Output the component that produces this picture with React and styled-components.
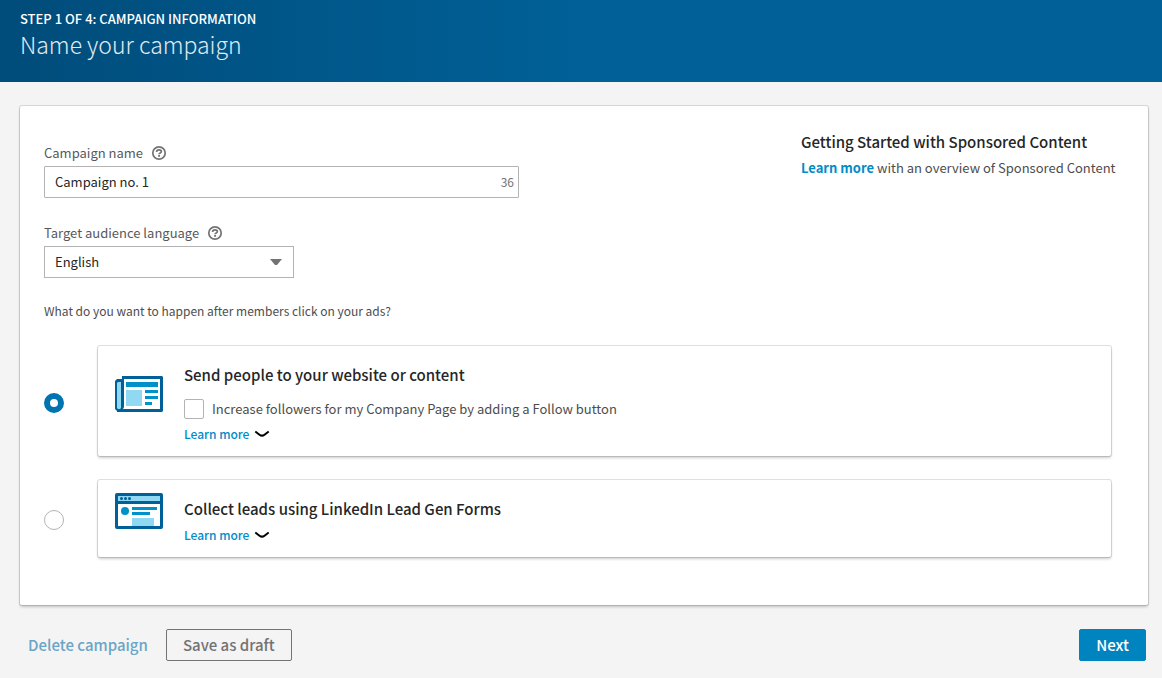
import { useState } from 'react';
import styled, { createGlobalStyle } from 'styled-components';

const GlobalStyle = createGlobalStyle`
    *, *::before, *::after {
        box-sizing: border-box;
    }
    body {
        margin: 0;
        background: #f4f4f4;
        color: #262626;
        font-family: 'Source Sans Pro', 'Noto Sans CJK SC', 'Open Sans', sans-serif;
        font-size: 13px;
        line-height: 20px;
    }
    button, input, select {
        font-family: inherit;
    }
    h1, h2, h3, p, fieldset {
        margin: 0;
        padding: 0;
        border: 0;
        min-width: 0;
    }
`;

const Header = styled.header`
    padding: 9px 20px 23px;
    color: #fff;
    background: linear-gradient(90deg, #004c7a 0%, #006097 50%, #006097 100%);
`;

const Step = styled.p`
    font-size: 13px;
    font-weight: 500;
    line-height: 20px;
`;

const Title = styled.h1`
    font-size: 23px;
    font-weight: 300;
    line-height: 30px;
    color: #e0ebf2;
`;

const Panel = styled.main`
    margin: 24px 14px 24px 20px;
    padding: 24px;
    background: #fff;
    border-radius: 2px;
    box-shadow: 0 0 0 1px rgba(0, 0, 0, 0.12), 0 2px 3px rgba(0, 0, 0, 0.2);
`;

const Top = styled.div`
    display: flex;
    justify-content: space-between;
    align-items: flex-start;
    gap: 24px;
`;

const Fields = styled.div`
    flex: 0 1 475px;
    padding-top: 12px;
`;

const Field = styled.div`
    margin-bottom: 24px;
`;

const LabelRow = styled.div`
    display: flex;
    align-items: center;
    gap: 8px;
    height: 24px;
    padding-bottom: 2px;
    color: #595959;
`;

const HelpButton = styled.button`
    display: flex;
    padding: 0;
    border: 0;
    background: none;
    color: #737373;
    cursor: pointer;
`;

const NameBox = styled.div`
    display: flex;
    align-items: center;
    height: 32px;
    padding-right: 4px;
    border: 1px solid #b3b3b3;
    border-radius: 1px;
`;

const NameInput = styled.input`
    flex: 1;
    min-width: 0;
    padding: 0 10px;
    border: 0;
    outline: 0;
    background: none;
    font-size: 13px;
    line-height: 20px;
    color: #262626;
`;

const Counter = styled.span`
    font-size: 12px;
    color: #737373;
`;

const SelectBox = styled.div`
    display: grid;
    align-items: center;
    width: 250px;
    height: 32px;
    border: 1px solid #b3b3b3;

    & > * {
        grid-area: 1 / 1;
    }
    svg {
        justify-self: end;
        margin-right: 11px;
        pointer-events: none;
    }
`;

const Select = styled.select`
    appearance: none;
    width: 100%;
    height: 30px;
    padding: 0 32px 2px 10px;
    border: 0;
    outline: 0;
    background: none;
    font-size: 13px;
    color: #262626;
`;

const Aside = styled.aside`
    flex: 0 0 323px;
    color: #4d4d4d;
`;

const AsideTitle = styled.h2`
    margin-bottom: 4px;
    font-size: 15px;
    font-weight: 500;
    line-height: 24px;
    color: #262626;
`;

const Link = styled.a`
    color: #008cc9;
    font-weight: 700;
    text-decoration: none;
`;

const Question = styled.legend`
    padding: 0;
    margin-bottom: 26px;
    font-size: 12px;
    line-height: 18px;
    color: #4d4d4d;
`;

const Option = styled.div`
    display: flex;
    align-items: center;
    gap: 34px;
    margin: 0 13px 24px 0;
`;

const Radio = styled.input`
    appearance: none;
    flex: none;
    width: 20px;
    height: 20px;
    margin: 3px 0 0;
    border: 1px solid #b3b3b3;
    border-radius: 50%;
    background: #fff;

    &:checked {
        border: 6px solid #0073b1;
    }
`;

const OptionCard = styled.div`
    display: flex;
    flex: 1;
    gap: 20px;
    align-items: flex-start;
    padding: ${({ $compact }) => ($compact ? '12px 16px' : '16px 16px 12px')};
    background: #fff;
    border-radius: 2px;
    box-shadow: 0 0 0 1px rgba(0, 0, 0, 0.12), 0 2px 3px rgba(0, 0, 0, 0.2);
`;

const Art = styled.svg`
    flex: none;
    width: 50px;
    height: 38px;
    margin-top: ${({ $drop }) => ($drop ? '13px' : '0')};
`;

const OptionBody = styled.div`
    display: flex;
    flex-direction: column;
    align-items: flex-start;
    gap: ${({ $compact }) => ($compact ? '3px' : '4px')};
    padding-top: ${({ $compact }) => ($compact ? '4px' : '0')};
`;

const OptionTitle = styled.label`
    font-size: 15px;
    font-weight: 500;
    line-height: 26px;
`;

const CheckRow = styled.label`
    display: flex;
    align-items: center;
    gap: 8px;
    margin-top: 6px;
    line-height: 22px;
    color: #4d4d4d;
`;

const Checkbox = styled.input`
    appearance: none;
    width: 20px;
    height: 20px;
    margin: 0;
    border: 1px solid #b3b3b3;
    border-radius: 2px;
    background: #fff;

    &:checked {
        background: #0073b1;
    }
`;

const MoreButton = styled.button`
    display: flex;
    align-items: center;
    gap: 5px;
    padding: 0;
    border: 0;
    background: none;
    font-size: 12px;
    font-weight: 500;
    line-height: 20px;
    color: #008cc9;
    cursor: pointer;
`;

const Footer = styled.footer`
    display: flex;
    align-items: center;
    gap: 18px;
    padding: 0 16px 16px 28px;
`;

const Button = styled.button`
    height: 32px;
    padding: ${({ $variant }) => ($variant === 'text' ? '0' : '0 16px')};
    border: 1px solid ${({ $variant }) => ({ outline: '#737373', primary: '#0084bf' }[$variant] || 'transparent')};
    border-width: ${({ $variant }) => ($variant === 'text' ? '0' : '1px')};
    border-radius: 2px;
    background: ${({ $variant }) => ($variant === 'primary' ? '#0084bf' : 'transparent')};
    color: ${({ $variant }) => ({ text: '#6ba5c6', outline: '#737373', primary: '#fff' }[$variant])};
    font-size: 15px;
    font-weight: 500;
    line-height: 24px;
    margin-left: ${({ $end }) => ($end ? 'auto' : '0')};
    cursor: pointer;
`;

function Help({ topic }) {
    return (
        <HelpButton type="button" aria-label={`Help with ${topic}`}>
            <svg width="16" height="16" viewBox="0 0 16 16" fill="none" stroke="currentColor">
                <circle cx="8" cy="8" r="6.2" strokeWidth="1.7" />
                <path d="M5.6 6.9C5.6 5.4 6.5 4.8 8 4.8s2.4.7 2.4 1.8c0 1.4-2.3 1.2-2.3 2.6" strokeWidth="1.7" />
                <path d="M8.1 10v1.8" strokeWidth="1.9" />
            </svg>
        </HelpButton>
    );
}

function LearnMore() {
    return (
        <MoreButton type="button">
            Learn more
            <svg width="16" height="8" viewBox="0 0 16 8" fill="none" stroke="#000" strokeWidth="2">
                <path d="M1.300 1.500L5.500 4.700Q8 6.600 10.500 4.700L14.700 1.500" />
            </svg>
        </MoreButton>
    );
}

function NewsArt() {
    return (
        <Art $drop viewBox="0 0 50 38" aria-hidden="true">
            <path d="M3 4h5v32H3l-2-2V6z" fill="#006097" />
            <path d="M4 7h3v26l-1 1H4l-1-1V8z" fill="#91d8f2" />
            <path d="M8 1h40l1 1v34l-1 1H3v-2h4z" fill="#006097" />
            <path d="M10 4h36v30H9l1-2z" fill="#fff" />
            <path d="M12 7h32v5H12zM31 15h13v3H31zM31 21h13v3H31zM31 27h7v3h-7z" fill="#0091ca" />
            <path d="M12 15h16v16H12z" fill="#91d8f2" />
        </Art>
    );
}

function FormArt() {
    return (
        <Art viewBox="0 0 50 38" aria-hidden="true">
            <rect x="1" y="1" width="48" height="36" rx="2" fill="#006097" />
            <path d="M4 4h42v5H4z" fill="#91d8f2" />
            <path d="M4 12h42v22H4z" fill="#fff" />
            <g fill="#006097">
                <circle cx="7.5" cy="6.5" r="1.5" />
                <circle cx="11.5" cy="6.5" r="1.5" />
                <circle cx="15.5" cy="6.5" r="1.5" />
            </g>
            <circle cx="11" cy="19" r="4" fill="#0091ca" />
            <path d="M18 15h25v3H18zM18 20h18v3H18z" fill="#0091ca" />
            <path d="M18 26h22v8H18z" fill="#91d8f2" />
        </Art>
    );
}

function App() {
    const [name, setName] = useState('Campaign no. 1');
    const [goal, setGoal] = useState('website');

    return (
        <>
            <GlobalStyle />
            <Header>
                <Step>STEP 1 OF 4: CAMPAIGN INFORMATION</Step>
                <Title>Name your campaign</Title>
            </Header>
            <Panel>
                <Top>
                    <Fields>
                        <Field>
                            <LabelRow>
                                <label htmlFor="name">Campaign name</label>
                                <Help topic="campaign name" />
                            </LabelRow>
                            <NameBox>
                                <NameInput id="name" maxLength={50} value={name} onChange={(e) => setName(e.target.value)} />
                                <Counter>{50 - name.length}</Counter>
                            </NameBox>
                        </Field>
                        <Field>
                            <LabelRow>
                                <label htmlFor="language">Target audience language</label>
                                <Help topic="target audience language" />
                            </LabelRow>
                            <SelectBox>
                                <Select id="language" defaultValue="English">
                                    <option>English</option>
                                </Select>
                                <svg width="12" height="6" viewBox="0 0 12 6">
                                    <path d="M0 0h12L7 6H5z" fill="#737373" />
                                </svg>
                            </SelectBox>
                        </Field>
                    </Fields>
                    <Aside>
                        <AsideTitle>Getting Started with Sponsored Content</AsideTitle>
                        <p><Link href="#overview">Learn more</Link> with an overview of Sponsored Content</p>
                    </Aside>
                </Top>
                <fieldset>
                    <Question>What do you want to happen after members click on your ads?</Question>
                    <Option>
                        <Radio type="radio" name="goal" id="website" checked={goal === 'website'} onChange={() => setGoal('website')} />
                        <OptionCard>
                            <NewsArt />
                            <OptionBody>
                                <OptionTitle htmlFor="website">Send people to your website or content</OptionTitle>
                                <CheckRow>
                                    <Checkbox type="checkbox" />
                                    Increase followers for my Company Page by adding a Follow button
                                </CheckRow>
                                <LearnMore />
                            </OptionBody>
                        </OptionCard>
                    </Option>
                    <Option>
                        <Radio type="radio" name="goal" id="leads" checked={goal === 'leads'} onChange={() => setGoal('leads')} />
                        <OptionCard $compact>
                            <FormArt />
                            <OptionBody $compact>
                                <OptionTitle htmlFor="leads">Collect leads using LinkedIn Lead Gen Forms</OptionTitle>
                                <LearnMore />
                            </OptionBody>
                        </OptionCard>
                    </Option>
                </fieldset>
            </Panel>
            <Footer>
                <Button type="button" $variant="text">Delete campaign</Button>
                <Button type="button" $variant="outline">Save as draft</Button>
                <Button type="button" $variant="primary" $end>Next</Button>
            </Footer>
        </>
    );
}

export default App;
